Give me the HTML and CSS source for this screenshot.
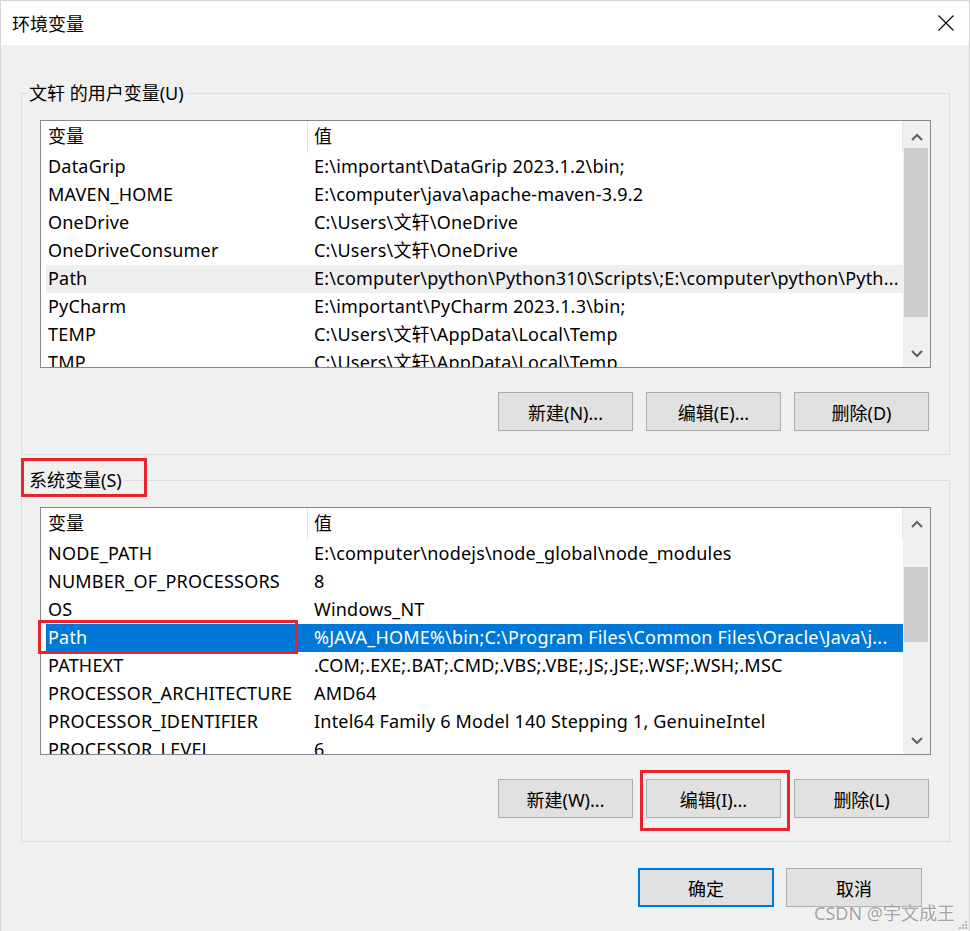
FILE: index.html
```html
<!DOCTYPE html>
<html>
<head>
  <title>环境变量</title>
  <meta charset="UTF-8">
  <link rel="stylesheet" href="styles.css">
</head>
<body>
  <div class="window">
    <div class="titlebar">
      <span class="title">环境变量</span>
      <span class="close-btn" title="关闭">
        <svg width="16" height="16" viewBox="0 0 16 16"><path d="M0.5 0.5 L15.5 15.5 M15.5 0.5 L0.5 15.5" stroke="#000" stroke-width="1.1" fill="none"/></svg>
      </span>
    </div>

    <!-- 用户变量 -->
    <fieldset class="group">
      <legend>文轩 的用户变量(U)</legend>
      <div class="group-body">
        <div class="listview">
          <div class="lv-main">
            <div class="lv-header">
              <div class="hd-name">变量</div>
              <div class="hd-value">值</div>
            </div>
            <div class="lv-row"><div class="cell-name">DataGrip</div><div class="cell-value">E:\important\DataGrip 2023.1.2\bin;</div></div>
            <div class="lv-row"><div class="cell-name">MAVEN_HOME</div><div class="cell-value">E:\computer\java\apache-maven-3.9.2</div></div>
            <div class="lv-row"><div class="cell-name">OneDrive</div><div class="cell-value">C:\Users\文轩\OneDrive</div></div>
            <div class="lv-row"><div class="cell-name">OneDriveConsumer</div><div class="cell-value">C:\Users\文轩\OneDrive</div></div>
            <div class="lv-row lv-row-inactive"><div class="cell-name">Path</div><div class="cell-value">E:\computer\python\Python310\Scripts\;E:\computer\python\Pyth...</div></div>
            <div class="lv-row"><div class="cell-name">PyCharm</div><div class="cell-value">E:\important\PyCharm 2023.1.3\bin;</div></div>
            <div class="lv-row"><div class="cell-name">TEMP</div><div class="cell-value">C:\Users\文轩\AppData\Local\Temp</div></div>
            <div class="lv-row"><div class="cell-name">TMP</div><div class="cell-value">C:\Users\文轩\AppData\Local\Temp</div></div>
          </div>
          <div class="lv-scroll">
            <div class="sb-btn sb-up">
              <svg width="12" height="8" viewBox="0 0 12 8"><path d="M1 7 L6 2 L11 7" stroke="#606060" stroke-width="2" fill="none"/></svg>
            </div>
            <div class="sb-track">
              <div class="sb-thumb" style="margin-top: 0px; height: 169px;"></div>
            </div>
            <div class="sb-btn sb-down">
              <svg width="12" height="8" viewBox="0 0 12 8"><path d="M1 1 L6 6 L11 1" stroke="#606060" stroke-width="2" fill="none"/></svg>
            </div>
          </div>
        </div>
        <div class="btn-row">
          <button class="btn">新建(N)...</button>
          <button class="btn">编辑(E)...</button>
          <button class="btn">删除(D)</button>
        </div>
      </div>
    </fieldset>

    <!-- 系统变量 -->
    <fieldset class="group group-system">
      <legend class="marked-legend">系统变量(S)</legend>
      <div class="group-body">
        <div class="listview">
          <div class="lv-main">
            <div class="lv-header">
              <div class="hd-name">变量</div>
              <div class="hd-value">值</div>
            </div>
            <div class="lv-row"><div class="cell-name">NODE_PATH</div><div class="cell-value">E:\computer\nodejs\node_global\node_modules</div></div>
            <div class="lv-row"><div class="cell-name">NUMBER_OF_PROCESSORS</div><div class="cell-value">8</div></div>
            <div class="lv-row"><div class="cell-name">OS</div><div class="cell-value">Windows_NT</div></div>
            <div class="lv-row lv-row-selected"><div class="cell-name marked-cell">Path</div><div class="cell-value">%JAVA_HOME%\bin;C:\Program Files\Common Files\Oracle\Java\j...</div></div>
            <div class="lv-row"><div class="cell-name">PATHEXT</div><div class="cell-value">.COM;.EXE;.BAT;.CMD;.VBS;.VBE;.JS;.JSE;.WSF;.WSH;.MSC</div></div>
            <div class="lv-row"><div class="cell-name">PROCESSOR_ARCHITECTURE</div><div class="cell-value">AMD64</div></div>
            <div class="lv-row"><div class="cell-name">PROCESSOR_IDENTIFIER</div><div class="cell-value">Intel64 Family 6 Model 140 Stepping 1, GenuineIntel</div></div>
            <div class="lv-row"><div class="cell-name">PROCESSOR_LEVEL</div><div class="cell-value">6</div></div>
          </div>
          <div class="lv-scroll">
            <div class="sb-btn sb-up">
              <svg width="12" height="8" viewBox="0 0 12 8"><path d="M1 7 L6 2 L11 7" stroke="#606060" stroke-width="2" fill="none"/></svg>
            </div>
            <div class="sb-track">
              <div class="sb-thumb" style="margin-top: 32px; height: 75px;"></div>
            </div>
            <div class="sb-btn sb-down">
              <svg width="12" height="8" viewBox="0 0 12 8"><path d="M1 1 L6 6 L11 1" stroke="#606060" stroke-width="2" fill="none"/></svg>
            </div>
          </div>
        </div>
        <div class="btn-row">
          <button class="btn">新建(W)...</button>
          <button class="btn marked-btn">编辑(I)...</button>
          <button class="btn">删除(L)</button>
        </div>
      </div>
    </fieldset>

    <div class="footer">
      <button class="btn btn-wide btn-default">确定</button>
      <button class="btn btn-wide">取消</button>
    </div>

    <div class="watermark">CSDN @宇文成王</div>
    <svg class="grip" width="10" height="10" viewBox="0 0 10 10">
      <rect x="7" y="1" width="2" height="2" fill="#b8b8b8"/>
      <rect x="4" y="4" width="2" height="2" fill="#b8b8b8"/>
      <rect x="7" y="4" width="2" height="2" fill="#b8b8b8"/>
      <rect x="1" y="7" width="2" height="2" fill="#b8b8b8"/>
      <rect x="4" y="7" width="2" height="2" fill="#b8b8b8"/>
      <rect x="7" y="7" width="2" height="2" fill="#b8b8b8"/>
    </svg>
  </div>
</body>
</html>
```

FILE: styles.css
```css
*, *::before, *::after {
  box-sizing: border-box;
}
body {
  margin: 0;
  width: 970px;
  height: 931px;
  font-family: "Noto Sans", "Noto Sans CJK SC", sans-serif;
  font-size: 18px;
  color: #000;
  background-color: #f0f0f0;
  overflow: hidden;
}
.window {
  position: relative;
  height: 931px;
  border: 1px solid #d4d4d4;
  border-bottom: none;
  display: flex;
  flex-direction: column;
}
.titlebar {
  height: 44px;
  background-color: #fff;
  display: flex;
  align-items: center;
  justify-content: space-between;
  padding: 0 15px 0 11px;
}
.title {
  line-height: 24px;
  padding-top: 1px;
}
.close-btn {
  display: flex;
  width: 16px;
  height: 16px;
}
/* 分组框 */
.group {
  margin: 36px 19px 0 20px;
  padding: 0;
  border: 1px solid #dcdcdc;
  min-width: 0;
}
.group legend {
  margin-left: 5px;
  padding: 0 2px;
  line-height: 24px;
}
.group-system {
  margin-top: 13px;
}
.group-body {
  padding: 15px 18px 23px 18px;
}
/* 列表 */
.listview {
  display: flex;
  height: 248px;
  border: 1px solid #828790;
  background-color: #fff;
  overflow-x: visible;
  overflow-y: clip;
}
.lv-main {
  flex: 1;
  min-width: 0;
}
.lv-header {
  display: flex;
  height: 32px;
  line-height: 31px;
  border-right: 1px solid #e5e5e5;
}
.hd-name {
  width: 267px;
  padding-left: 7px;
  border-right: 1px solid #e5e5e5;
}
.hd-value {
  padding-left: 6px;
}
.lv-row {
  display: flex;
  height: 28px;
  line-height: 27px;
  margin-left: 5px;
  letter-spacing: 0.2px;
}
.cell-name {
  width: 261px;
  padding-left: 2px;
  white-space: nowrap;
}
.cell-value {
  flex: 1;
  min-width: 0;
  padding-left: 7px;
  white-space: nowrap;
  overflow: hidden;
}
.lv-row-inactive {
  background-color: #efefef;
}
.lv-row-selected {
  background-color: #0078d7;
  color: #fff;
}
/* 滚动条 */
.lv-scroll {
  width: 27px;
  background-color: #f0f0f0;
  display: flex;
  flex-direction: column;
}
.sb-btn {
  height: 27px;
  display: flex;
  justify-content: center;
}
.sb-up {
  padding-top: 12px;
}
.sb-down {
  padding-top: 10px;
}
.sb-btn svg {
  display: block;
  margin-left: 1px;
}
.sb-track {
  flex: 1;
}
.sb-thumb {
  width: 24px;
  margin-left: 1px;
  background-color: #cdcdcd;
}
/* 按钮 */
.btn-row {
  display: flex;
  justify-content: flex-end;
  gap: 13px;
  margin-top: 24px;
  padding-right: 2px;
}
.btn {
  width: 135px;
  height: 39px;
  padding: 0;
  font: inherit;
  color: #000;
  background-color: #e1e1e1;
  border: 1px solid #adadad;
  border-radius: 0;
}
.btn-wide {
  width: 136px;
}
.btn-default {
  border: 2px solid #0078d7;
}
.footer {
  display: flex;
  justify-content: flex-end;
  gap: 12px;
  margin-top: 26px;
  padding-right: 47px;
}
/* 红色标注框 */
.marked-legend,
.marked-cell,
.marked-btn {
  position: relative;
}
.marked-legend::after,
.marked-cell::after,
.marked-btn::after {
  content: "";
  position: absolute;
  border: 3px solid #e8232c;
}
.marked-legend::after {
  left: -6px;
  top: -10px;
  width: 126px;
  height: 39px;
}
.marked-cell::after {
  left: -8px;
  top: -4px;
  width: 260px;
  height: 34px;
}
.marked-btn::after {
  left: -7px;
  top: -10px;
  width: 150px;
  height: 61px;
}
.watermark {
  position: absolute;
  right: 14px;
  bottom: 7px;
  font-size: 18px;
  line-height: 22px;
  color: rgba(140, 140, 140, 0.8);
  text-shadow: 0 0 2px #fff;
}
.grip {
  position: absolute;
  right: 1px;
  bottom: 1px;
}
```
